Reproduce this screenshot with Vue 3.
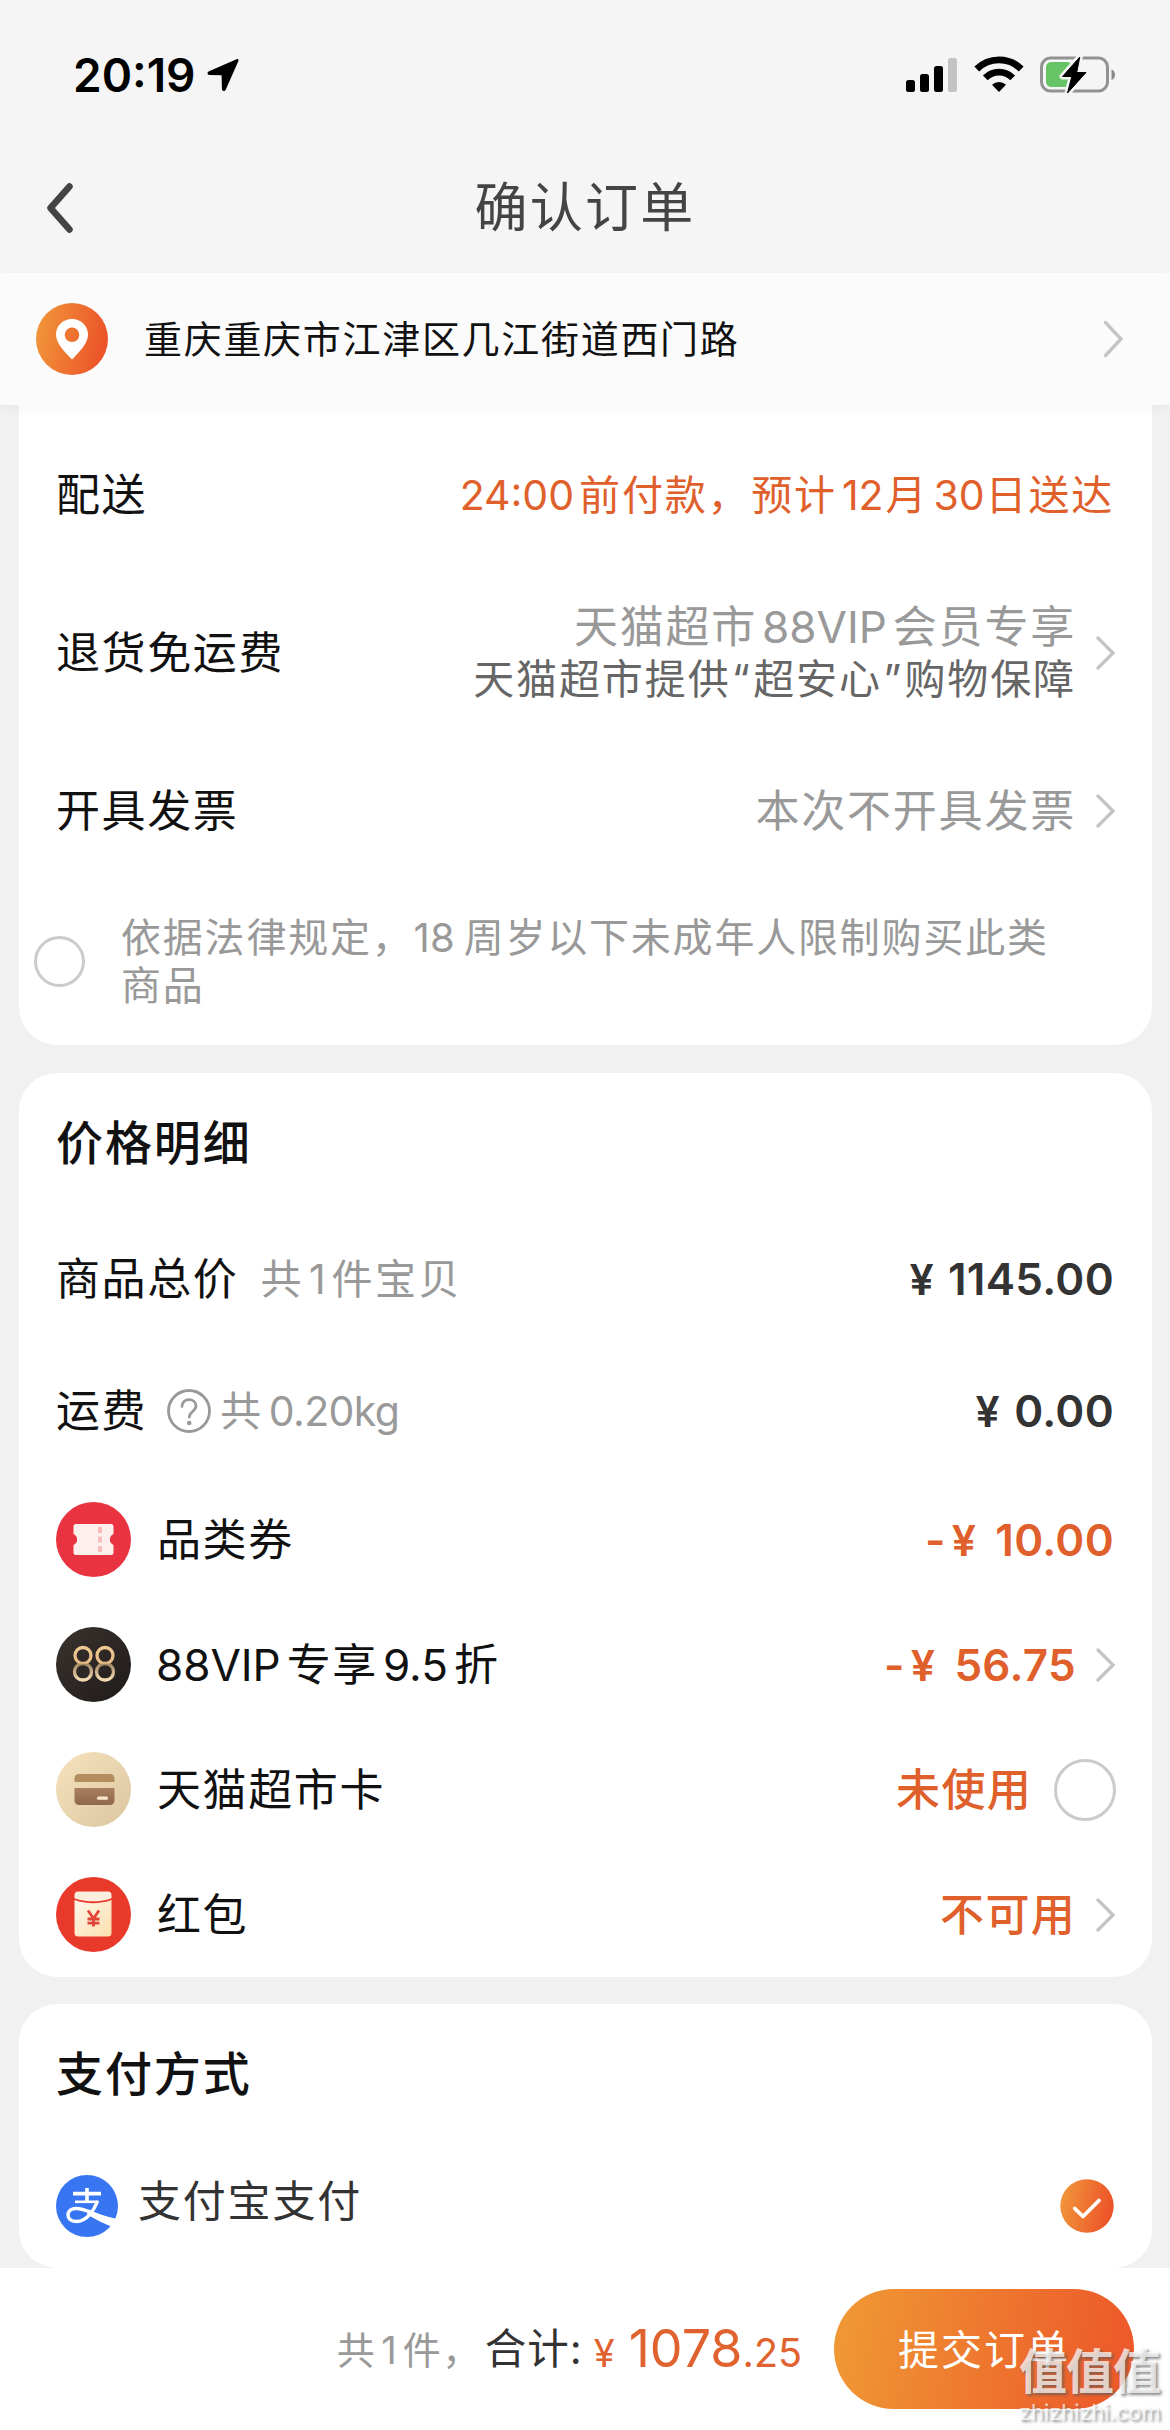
<script setup>
const discounts = [
  { id: 'coupon', label: '品类券', value: '10.00', money: true },
  { id: 'vip', money: true, value: '56.75', arrow: true },
  { id: 'card', label: '天猫超市卡', value: '未使用', radio: true },
  { id: 'packet', label: '红包', value: '不可用', arrow: true },
]
</script>

<template>
  <div class="page">
    <header class="header">
      <div class="status">
        <span class="time">20:19</span>
        <svg class="locate" width="32" height="34" viewBox="0 0 32 34"><path d="M29.500 1.200 2 13.200c-2.200 1-1.800 3.600.6 3.700l12 .3.3 13.500c.1 2.700 2.900 3 3.900.7L31.300 3.200c.7-1.500-.3-2.600-1.800-2z" /></svg>
        <span class="grow"></span>
        <svg class="signal" width="52" height="36" viewBox="0 0 52 36">
          <rect x="0" y="23" width="9" height="12" rx="2.500" />
          <rect x="14" y="17" width="9" height="18" rx="2.500" />
          <rect x="28" y="9" width="9" height="26" rx="2.500" />
          <rect x="42" y="1" width="9" height="34" rx="2.500" fill="#c3c3c3" />
        </svg>
        <svg class="wifi" width="50" height="38" viewBox="0 0 50 38">
          <g fill="none" stroke="#000" stroke-width="6.800">
            <path d="M2.800 14a31.500 31.500 0 0 1 44.400 0" />
            <path d="M11.300 22.800a19.400 19.400 0 0 1 27.400 0" />
          </g>
          <path d="M25 37l-7-7.200a10 10 0 0 1 14 0z" />
        </svg>
        <svg class="battery" width="78" height="38" viewBox="0 0 78 38">
          <rect x="1.500" y="2" width="66" height="33" rx="9" fill="none" stroke="#929294" stroke-width="3" />
          <path d="M71.500 13.500c4.700 1.500 4.700 9 0 10.500z" fill="#8a8a8c" />
          <rect x="6" y="6" width="26" height="25" rx="5" fill="#66c466" />
          <path d="M39.800 1 22.500 20.500h9.300L27.500 37 46 16.500h-9.300z" stroke="#f5f5f5" stroke-width="6" stroke-linejoin="round" />
          <path d="M39.800 1 22.500 20.500h9.300L27.500 37 46 16.500h-9.300z" stroke="#000" stroke-linejoin="round" />
        </svg>
      </div>
      <div class="nav">
        <svg class="back" width="30" height="50" viewBox="0 0 30 50"><path d="M24.500 3.500 5.500 25l19 21.500" /></svg>
        <h1>确认订单</h1>
      </div>
    </header>

    <section class="address">
      <svg class="pin" width="72" height="72" viewBox="0 0 72 72">
        <defs><linearGradient id="warm" x1="0" y1="0.200" x2="1" y2="0.400"><stop offset="0" stop-color="#f1973a" /><stop offset="1" stop-color="#ec5329" /></linearGradient></defs>
        <circle cx="36" cy="36" r="36" fill="url(#warm)" />
        <path fill="#fff" fill-rule="evenodd" d="M36 16c9 0 16 6.800 16 15.500C52 41 43 49 36 56.500 29 49 20 41 20 31.500 20 22.800 27 16 36 16zm0 8.500a7.300 7.300 0 1 0 0 14.600 7.300 7.300 0 0 0 0-14.600z" />
      </svg>
      <span class="addr-text">重庆重庆市江津区几江街道西门路</span>
      <span class="grow"></span>
      <svg class="chev" width="22" height="38" viewBox="0 0 22 38"><path d="M2.500 2.500 18 19 2.500 35.500" /></svg>
    </section>

    <section class="card first">
      <div class="row r-ship">
        <span class="label">配送</span>
        <span class="ship"><span class="n clock">24:00</span>前付款，<span class="n lead"></span>预计<span class="n month">12</span>月<span class="n day">30</span>日送达</span>
      </div>
      <div class="row r-return">
        <span class="label">退货免运费</span>
        <div class="with-arrow">
          <div class="two">
            <div class="mute">天猫超市<span class="n">88VIP</span>会员专享</div>
            <div class="dark">天猫超市提供<span class="q">“</span>超安心<span class="q">”</span>购物保障</div>
          </div>
          <svg class="chev sm" width="20" height="34" viewBox="0 0 20 34"><path d="M2 2 17 17 2 32" /></svg>
        </div>
      </div>
      <div class="row r-invoice">
        <span class="label">开具发票</span>
        <div class="with-arrow">
          <span class="mute">本次不开具发票</span>
          <svg class="chev sm" width="20" height="34" viewBox="0 0 20 34"><path d="M2 2 17 17 2 32" /></svg>
        </div>
      </div>
      <div class="notice">
        <span class="radio small"></span>
        <p>依据法律规定，<span class="n age">18</span>周岁以下未成年人限制购买此类<br />商品</p>
      </div>
    </section>

    <section class="card">
      <h2>价格明细</h2>
      <div class="row r-price">
        <div class="left"><span class="label">商品总价</span><span class="sub count">共<span class="n">1</span>件宝贝</span></div>
        <span class="price"><i>¥</i>1145.00</span>
      </div>
      <div class="row r-price">
        <div class="left">
          <span class="label">运费</span>
          <svg class="help" width="44" height="44" viewBox="0 0 44 44">
            <circle cx="22" cy="22" r="20.500" />
            <path d="M15 17.500c0-4.300 3-6.800 7-6.800s7 2.600 7 6.300c0 5.200-6.700 5.700-6.700 11" />
            <circle class="dot" cx="22.200" cy="34" r="2.300" />
          </svg>
          <span class="sub weight">共<span class="n">0.20kg</span></span>
        </div>
        <span class="price"><i>¥</i>0.00</span>
      </div>
      <div v-for="d in discounts" :key="d.id" class="row r-disc">
        <div class="left">
          <svg class="disc" width="75" height="75" viewBox="0 0 75 75">
            <template v-if="d.id === 'coupon'">
              <circle cx="37.500" cy="37.500" r="37.500" fill="#e93340" />
              <path fill="#fdf0ec" d="M20 22h35a2.500 2.500 0 0 1 2.500 2.500V32a6 6 0 0 0 0 11v7.500A2.500 2.500 0 0 1 55 53H20a2.500 2.500 0 0 1-2.500-2.500V43a6 6 0 0 0 0-11v-7.500A2.500 2.500 0 0 1 20 22z" />
              <path d="M44 25v6M44 34.500v6M44 44v6" stroke="#f8bcbc" stroke-width="4" />
            </template>
            <template v-else-if="d.id === 'vip'">
              <defs>
                <linearGradient id="ink" x1="0" y1="0" x2="1" y2="1"><stop offset="0" stop-color="#3a332f" /><stop offset="1" stop-color="#1f1b1a" /></linearGradient>
                <linearGradient id="gold" x1="0" y1="0" x2="0" y2="1"><stop offset="0" stop-color="#f0c892" /><stop offset=".48" stop-color="#e6ba84" /><stop offset=".52" stop-color="#a58a66" /><stop offset="1" stop-color="#f5dcb2" /></linearGradient>
              </defs>
              <circle cx="37.500" cy="37.500" r="37.500" fill="url(#ink)" />
              <g fill="none" stroke="url(#gold)" stroke-width="3.300">
                <path d="M27 20.500c4.700 0 8 3.600 8 8s-3.300 8-8 8-8-3.600-8-8 3.300-8 8-8zM27 36.500c5 0 8.500 3.600 8.500 8.200S32 53 27 53s-8.500-3.700-8.500-8.300 3.500-8.200 8.500-8.200z" />
                <path d="M49 20.500c4.700 0 8 3.600 8 8s-3.300 8-8 8-8-3.600-8-8 3.300-8 8-8zM49 36.500c5 0 8.500 3.600 8.500 8.200S54 53 49 53s-8.500-3.700-8.500-8.300 3.500-8.200 8.500-8.200z" />
              </g>
            </template>
            <template v-else-if="d.id === 'card'">
              <defs>
                <linearGradient id="cream" x1="0" y1="0" x2="1" y2="1"><stop offset="0" stop-color="#f5e3bd" /><stop offset="1" stop-color="#dcc6a2" /></linearGradient>
                <linearGradient id="cocoa" x1="0" y1="0" x2="0" y2="1"><stop offset="0" stop-color="#a87f60" /><stop offset="1" stop-color="#8f694c" /></linearGradient>
              </defs>
              <circle cx="37.500" cy="37.500" r="37.500" fill="url(#cream)" />
              <path fill="#b28d5f" d="M23 22h31a4.500 4.500 0 0 1 4.500 4.500V30h-40v-3.500A4.500 4.500 0 0 1 23 22z" />
              <path fill="url(#cocoa)" d="M18.500 36h40v12.500A4.500 4.500 0 0 1 54 53H23a4.500 4.500 0 0 1-4.500-4.500z" />
              <rect x="41" y="44.500" width="11" height="3.200" rx="1.500" fill="#f6e7cd" />
            </template>
            <template v-else>
              <defs><linearGradient id="paper" x1="0" y1="0" x2="1" y2="1"><stop offset="0" stop-color="#fff6ea" /><stop offset="1" stop-color="#fbdfae" /></linearGradient></defs>
              <circle cx="37.500" cy="37.500" r="37.500" fill="#e9392a" />
              <path fill="#fdeedd" d="M22 14.500h30a3.500 3.500 0 0 1 3.500 3.500v3.200c-11 4.200-25.500 4.200-37 0V18a3.500 3.500 0 0 1 3.500-3.500z" />
              <path fill="url(#paper)" d="M18.500 23c11.500 4.200 26 4.200 37 0v33a3.500 3.500 0 0 1-3.500 3.500H22a3.500 3.500 0 0 1-3.500-3.500z" />
              <path d="m32 33.500 5.500 8 5.500-8M31.500 42h12M31.500 46.200h12M37.500 41v8.500" fill="none" stroke="#e2463a" stroke-width="2.800" />
            </template>
          </svg>
          <span v-if="d.label" class="label">{{ d.label }}</span>
          <span v-else class="label vip"><span class="n start">88VIP</span>专享<span class="n">9.5</span>折</span>
        </div>
        <div class="with-arrow">
          <span v-if="d.money" class="price hot"><b>-</b><i>¥</i>{{ d.value }}</span>
          <span v-else class="state">{{ d.value }}</span>
          <svg v-if="d.arrow" class="chev sm" width="20" height="34" viewBox="0 0 20 34"><path d="M2 2 17 17 2 32" /></svg>
          <span v-if="d.radio" class="radio big"></span>
        </div>
      </div>
    </section>

    <section class="card last">
      <h2>支付方式</h2>
      <div class="row r-pay">
        <div class="left">
          <svg class="alipay" width="62" height="62" viewBox="0 0 62 62">
            <circle cx="31" cy="31" r="31" fill="#3875f3" />
            <g fill="none" stroke="#fff">
              <path d="M17 18.600h28M31 13v13.500" stroke-width="3.600" />
              <path d="M19 26.800h23.500" stroke-width="2.600" />
              <path d="M41.500 26c-3.500 9.500-11 20.500-21 20.500-6 0-8.500-3-8.500-6.700 0-4 3.500-6.500 8.500-6.300 4 .1 8 1.200 14 3.600" stroke-width="3.400" />
            </g>
            <path fill="#fff" d="M32 34.500c8 3.500 18 7 29 9.500-1 3-2.500 5.500-4.500 8-8.500-3.500-18-8-25.500-12.500z" />
          </svg>
          <span class="pay-name">支付宝支付</span>
        </div>
        <svg class="tick" width="54" height="54" viewBox="0 0 54 54">
          <circle cx="27" cy="27" r="26.700" fill="url(#warm)" />
          <path d="M14.800 29.500 23 37.500 39 21.500" fill="none" stroke="#fff" stroke-width="3.800" stroke-linecap="round" stroke-linejoin="round" />
        </svg>
      </div>
    </section>

    <footer class="footer">
      <span class="f-count">共<span class="n">1</span>件，</span>
      <span class="f-total">合计:</span>
      <span class="f-yen">¥</span>
      <span class="f-int">1078</span>
      <span class="f-dec">.25</span>
      <button class="submit">提交订单</button>
      <div class="mark"><strong>值值值</strong><em>zhizhizhi.com</em></div>
    </footer>
  </div>
</template>

<style>
body { margin: 0; background: #f1f1f1; }
</style>

<style scoped>
.page { width: 1170px; height: 2430px; overflow: hidden; display: flex; flex-direction: column; background: #f1f1f1; font-family: Inter, "Noto Sans CJK SC", sans-serif; color: #111; line-height: 1; white-space: nowrap; }
svg { display: block; flex: none; }
i, em { font-style: normal; }
.grow { flex: 1; }
.header { height: 273px; background: #f5f5f5; }
.status { height: 149px; display: flex; align-items: center; padding: 0 52px 0 73px; box-sizing: border-box; }
.time { font-size: 46px; font-weight: 600; color: #000; width: 134px; letter-spacing: 0; }
.signal { margin-right: 16px; }
.wifi { margin-right: 16px; margin-top: -2px; }
.nav { height: 119px; display: flex; align-items: center; justify-content: center; position: relative; }
.back { position: absolute; left: 45px; top: 34px; }
.back path { fill: none; stroke: #444; stroke-width: 6.500; stroke-linecap: round; stroke-linejoin: round; }
h1 { margin: 0; font-size: 53px; font-weight: 400; letter-spacing: 2.200px; color: #444; }
.address { height: 132px; flex: none; background: #fbfbfb; display: flex; align-items: center; padding: 0 45px 0 36px; position: relative; box-shadow: 0 4px 12px rgba(0, 0, 0, .035); }
.addr-text { margin-left: 36px; font-size: 38px; letter-spacing: 1.700px; }
.chev path { fill: none; stroke: #c4c4c4; stroke-width: 3.300; stroke-linecap: round; stroke-linejoin: miter; }
.card { margin: 0 18px 27px 19px; background: #fff; border-radius: 38px; flex: none; }
.first { border-radius: 0 0 38px 38px; padding-top: 25px; margin-bottom: 28px; }
.last { margin-bottom: 0; }
.row { display: flex; align-items: center; justify-content: space-between; padding: 0 38px 0 37px; }
.left, .with-arrow { display: flex; align-items: center; }
.label { font-size: 44px; letter-spacing: 1.600px; }
.r-ship { height: 132px; }
.r-ship .label, .r-ship .ship { padding-bottom: 2px; }
.r-return { height: 182px; }
.r-invoice { height: 134px; }
.ship { font-size: 41px; letter-spacing: 1.800px; color: #e0602c; }
.n { margin: 0 6px 0 5px; letter-spacing: 0; }
.n.clock { margin: 0 5px 0 0; }
.n.lead { margin: 0 1px 0 0; }
.n.month { margin-right: 2px; }
.n.day { margin-right: 1px; }
.n.age { margin: 0 9px 0 0; }
.n.start { margin-left: -1px; }
.q { margin: 0 1.300px; }
.mute { font-size: 44px; letter-spacing: 1.800px; color: #999; }
.dark { font-size: 41px; letter-spacing: 1.900px; color: #666; }
.two { text-align: right; }
.two div { line-height: 52px; }
.sm { margin-left: 20px; margin-right: -2px; }
.notice { height: 167px; display: flex; align-items: center; padding-left: 15px; }
.notice p { margin: 0 0 0 36px; font-size: 40px; line-height: 48px; letter-spacing: 1.800px; color: #999; }
.radio { box-sizing: border-box; border: 3.500px solid #cbcbcb; border-radius: 50%; flex: none; }
.small { width: 51px; height: 51px; }
.big { width: 62px; height: 62px; margin-left: 22px; margin-right: -2px; }
h2 { margin: 0; height: 140px; line-height: 140px; padding-left: 37px; font-size: 47px; font-weight: 500; letter-spacing: 1.900px; }
.r-price { height: 132px; }
.r-disc { height: 125px; }
.sub { font-size: 41px; letter-spacing: 2.500px; color: #999; }
.count { margin-left: 22px; }
.help { margin-left: 20px; margin-right: 9px; }
.weight .n { margin: 0 0 0 5px; letter-spacing: -.6px; }
.help circle, .help path { fill: none; stroke: #999; stroke-width: 2.800; stroke-linecap: round; }
.help .dot { fill: #999; stroke: none; }
.price { font-size: 44px; font-weight: 600; color: #333; letter-spacing: .3px; }
.price i { margin-right: 14px; font-size: 43px; }
.price b { margin-right: 6px; font-weight: 600; }
.hot i { margin-right: 19px; }
.hot, .state { color: #e0602c; }
.state { font-size: 44px; letter-spacing: 1.300px; font-weight: 500; }
.disc { margin-right: 26px; }
.r-pay { height: 124px; }
.pay-name { font-size: 43px; letter-spacing: 1.800px; color: #333; margin-left: 20px; padding-bottom: 10px; }
.footer { flex: 1; background: #fff; display: flex; align-items: baseline; justify-content: flex-end; padding-right: 36px; position: relative; }
.f-count { font-size: 38px; color: #999; letter-spacing: 1.500px; margin-right: 3px; transform: translateY(-3px); }
.f-total { font-size: 41.500px; color: #333; letter-spacing: 1px; margin-right: 11px; transform: translateY(-3px); }
.f-yen, .f-int, .f-dec { color: #e0622e; }
.f-yen { font-size: 38px; margin-right: 14px; }
.f-int { font-size: 52px; margin-top: 55px; }
.f-dec { font-size: 39.500px; margin-right: 32px; }
.submit { align-self: flex-start; width: 300px; height: 120px; margin: 21px 0 0; border: 0; padding: 0 0 5px; border-radius: 60px; background: linear-gradient(100deg, #f09a35, #ee7b2f 45%, #ed5b2a 92%); color: #fff; font: 400 41px Inter, "Noto Sans CJK SC", sans-serif; letter-spacing: 2px; }
.mark { position: absolute; left: 1019px; top: 74px; width: 145px; color: rgba(255, 255, 255, .72); text-shadow: 2px 2px 3px rgba(90, 90, 90, .7); }
.mark strong { display: block; font-size: 48px; line-height: 60px; letter-spacing: -1px; font-weight: 700; }
.mark em { display: block; font-size: 21.800px; line-height: 20px; }
</style>
